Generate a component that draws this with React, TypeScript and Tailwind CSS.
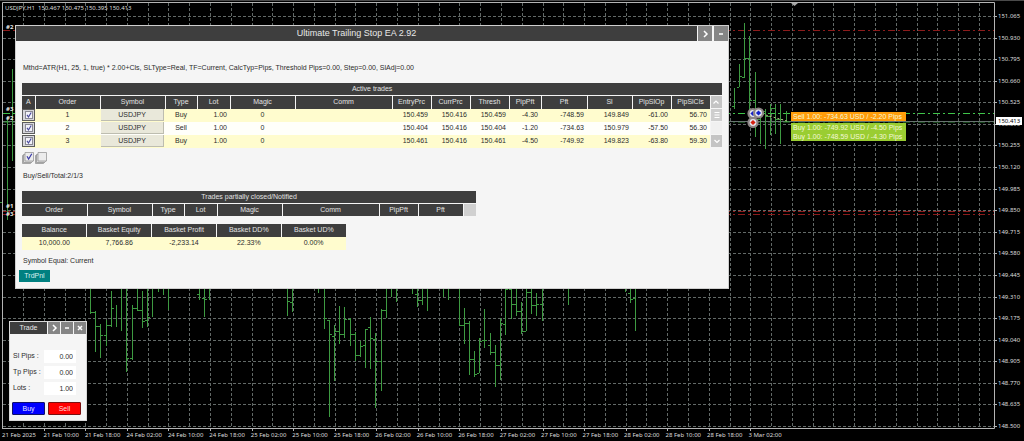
import { ReactNode } from "react";

type Bar = [x: number, high: number, low: number, open?: number, close?: number];

const bars: Bar[] = [
  [2, 202, 272, 202], [7, 117, 220, 121], [12, 69, 161],
  [90, 285, 314, undefined, 312], [95, 311, 352, 312, 326], [100, 324, 358, 326, 335], [106, 320, 346, 335, 325],
  [111, 291, 327, 325, 308], [116, 305, 327], [121, 285, 331], [126, 285, 372, undefined, 358], [132, 305, 360, 358, 308],
  [137, 285, 311, 308, 310], [142, 291, 328, 310, 321], [147, 285, 327, 320, 317], [152, 285, 317], [158, 285, 292],
  [163, 285, 295], [168, 285, 310], [199, 285, 300, 294], [204, 285, 317, 298, 299], [209, 285, 300],
  [287, 285, 316, undefined, 301], [292, 285, 312, 302], [318, 285, 293], [324, 285, 329, undefined, 318],
  [329, 320, 417, 320, 334], [334, 325, 381, 336, 331], [339, 306, 344, 331, 334], [344, 307, 338, 334, 319],
  [350, 318, 346, 319, 334], [355, 332, 361, 334, 355], [360, 341, 357, 355, 346], [365, 329, 368, 345, 329],
  [370, 317, 369, 327, 338], [375, 333, 408, 339, 361], [381, 309, 391, 361, 310], [386, 285, 318, 310],
  [391, 285, 297], [396, 285, 302], [412, 285, 294], [417, 285, 307, 294, 300], [422, 285, 305, 300], [427, 285, 311],
  [443, 285, 297], [448, 285, 300], [459, 285, 326, undefined, 325], [464, 308, 344, 325, 323], [469, 321, 375, 323, 359],
  [474, 351, 377, 359, 374], [479, 338, 373, 373, 341], [484, 309, 348, 340, 340], [490, 333, 355, 345, 352],
  [495, 345, 387, 352, 365], [500, 318, 380, 365, 323], [505, 285, 335, 324, 289], [511, 285, 319, 289, 304],
  [516, 285, 316, 304, 311], [521, 302, 334, 311, 331], [526, 285, 331, 331, 292], [531, 285, 314, 292, 305],
  [536, 293, 316, 305, 304], [542, 285, 321, 304], [568, 285, 305], [625, 285, 292], [630, 285, 303, 293, 299], [635, 285, 331, 298],
  [734, 88, 109, 106], [739, 64, 87, 87, 76], [744, 23, 78, 77, 58], [749, 36, 111, 58, 100],
  [755, 72, 137, 100, 119], [760, 109, 144, 119, 112], [765, 109, 149, 111, 116], [770, 104, 135, 116, 108],
  [775, 104, 134, 108, 119], [780, 104, 144, 119, 119], [786, 111, 122, 121, 121],
];

const prices = [
  "151.065", "150.930", "150.795", "150.660", "150.525", "150.390", "150.255", "150.120", "149.985", "149.850",
  "149.715", "149.580", "149.445", "149.310", "149.175", "149.040", "148.905", "148.770", "148.635", "148.500",
];

const times = [
  "21 Feb 2025", "21 Feb 10:00", "21 Feb 18:00", "24 Feb 02:00", "24 Feb 10:00", "24 Feb 18:00", "25 Feb 02:00",
  "25 Feb 10:00", "25 Feb 18:00", "26 Feb 02:00", "26 Feb 10:00", "26 Feb 18:00", "27 Feb 02:00", "27 Feb 10:00",
  "27 Feb 18:00", "28 Feb 02:00", "28 Feb 10:00", "28 Feb 18:00", "3 Mar 02:00",
];

const gridX = Array.from({ length: 47 }, (_, i) => Math.round(23 + i * 20.78));
const gridY = Array.from({ length: 20 }, (_, i) => Math.round(16 + i * 21.58));

function Marker({ x, y, color }: { x: number; y: number; color: string }) {
  return (
    <g>
      <circle cx={x} cy={y} r="5.6" fill="#8d8585" />
      <circle cx={x} cy={y} r="3.4" fill="#e4e4ee" />
      <path d={`M${x - 2.6} ${y}L${x} ${y - 2.6}L${x + 2.6} ${y}L${x} ${y + 2.6}Z`} fill={color} />
    </g>
  );
}

function Chart() {
  return (
    <svg className="absolute inset-0 h-full w-full" viewBox="0 0 1024 441" preserveAspectRatio="none" aria-hidden="true">
      <rect width="1024" height="1" fill="#4a4a4a" />
      <g stroke="#626967" strokeWidth="1" strokeDasharray="3 2">
        {gridX.map((x) => <path key={x} d={`M${x + 0.5} 3V428`} />)}
        {gridY.map((y) => <path key={y} d={`M3 ${y + 0.5}H994`} />)}
      </g>
      <g stroke="#8c1c1c" strokeWidth="1" strokeDasharray="7 3 2 3">
        <path d="M3 30.5H994M3 211.5H994M3 214.5H994" />
      </g>
      <path d="M3 121.5H994" stroke="#66736f" />
      <g stroke="#3fc44a" strokeDasharray="7 3 2 3">
        <path d="M3 113.5H994" />
        <path d="M3 122.5H994" strokeOpacity=".35" />
      </g>
      <g stroke="#3d9a41" strokeWidth="1">
        {bars.map(([x, h, l, o, c]) => (
          <path
            key={x}
            d={`M${x + 0.5} ${h}V${l}` + (o ? `M${x - 2} ${o + 0.5}H${x}` : "") + (c ? `M${x + 1} ${c + 0.5}H${x + 3}` : "")}
          />
        ))}
      </g>
      <path d="M762 114L787 121" stroke="#b9b98a" strokeDasharray="2 2" />
      <Marker x={753} y={113.5} color="#1420c8" />
      <Marker x={758.5} y={113} color="#1420c8" />
      <Marker x={753} y={122.5} color="#d42010" />
      <path d="M2.5 428V2.5H994.5V428.5H2" fill="none" stroke="#b4b4b4" />
      <path d="M791 3H798L794.500 6Z" fill="#a8a8a8" />
      <g stroke="#b4b4b4">
        {gridY.map((y) => <path key={y} d={`M995 ${y + 0.5}H997`} />)}
        {gridX.filter((_, i) => i % 2 === 1 && i < 36).map((x) => <path key={x} d={`M${x + 0.5} 429V431`} />)}
      </g>
      <g fill="#e8e8e8" className="font-['Noto_Sans',sans-serif] text-[6px] font-bold">
        <text x="6" y="29">#2</text>
        <text x="6" y="111">#3</text>
        <text x="6" y="120">#2</text>
        <text x="6" y="208">#1</text>
        <text x="6" y="216">#3</text>
      </g>
    </svg>
  );
}

function TradeTag({ text, tone }: { text: string; tone: string }) {
  return <div className={`h-[9px] w-[115px] whitespace-nowrap pl-[2px] text-[7px] leading-[9px] text-[#f4f7d8] ${tone}`}>{text}</div>;
}

function TitleButton({ label, kind }: { label: string; kind: "next" | "minus" | "close" }) {
  const paths = { next: "M3 1L6 4L3 7", minus: "M2 4H6", close: "M2 2L6 6M6 2L2 6" };
  return (
    <button aria-label={label} className="flex h-full flex-1 items-center justify-center bg-[#858585]">
      <svg viewBox="0 0 8 8" className="h-2 w-2" fill="none" stroke="#fff" strokeWidth="1.5"><path d={paths[kind]} /></svg>
    </button>
  );
}

function Check({ label }: { label: string }) {
  return (
    <label className="relative flex h-3 items-center justify-center border border-[#5c5c5c] bg-[#d6d6dc]">
      <input type="checkbox" defaultChecked aria-label={label} className="h-2 w-2 appearance-none border border-[#8a8a94] bg-[#f3f3fa]" />
      <svg viewBox="0 0 8 8" className="pointer-events-none absolute h-2 w-2" fill="none" stroke="#4a4a9c" strokeWidth="1.2">
        <path d="M2 3.800L3.500 6L6.200 1.500" />
      </svg>
    </label>
  );
}

function StackIcon({ label, checked }: { label: string; checked?: boolean }) {
  return (
    <button aria-label={label} className="h-[12px] w-[12px]">
      <svg viewBox="0 0 12 12" className="h-3 w-3" fill="#ececec" stroke="#8c8c8c" strokeWidth=".7">
        <path d="M.5 3.500V11.500H8.500L9.500 10.500V2.500Z" fill="#cfcfcf" />
        <path d="M1.500 2.500V10.500H9.500L10.500 9.500V1.500Z" fill="#dadada" />
        <path d="M3 .5V9H11.500V.5Z" />
        {checked && <path d="M5 4.300L6.600 7L9.800 1.800" fill="none" stroke="#3c3ca8" strokeWidth="1.2" />}
      </svg>
    </button>
  );
}

function Th({ children }: { children?: ReactNode }) {
  return <th className="h-[13px] overflow-hidden border-l border-t border-[#f5f5f5] bg-[#3e3e3e] p-0 text-center font-normal text-[#e2e2e2] first:border-l-0">{children}</th>;
}

function Columns({ widths }: { widths: string[] }) {
  return <colgroup>{widths.map((w, i) => <col key={i} className={w} />)}</colgroup>;
}

const trades = [
  { order: "1", type: "Buy", entry: "150.459", curr: "150.416", thresh: "150.459", pip: "-4.30", pft: "-748.59", sl: "149.849", op: "-61.00", cls: "56.70" },
  { order: "2", type: "Sell", entry: "150.404", curr: "150.416", thresh: "150.404", pip: "-1.20", pft: "-734.63", sl: "150.979", op: "-57.50", cls: "56.30" },
  { order: "3", type: "Buy", entry: "150.461", curr: "150.416", thresh: "150.461", pip: "-4.50", pft: "-749.92", sl: "149.823", op: "-63.80", cls: "59.30" },
];

const activeWidths = ["w-[13px]", "w-[65px]", "w-[65px]", "w-[32px]", "w-[33px]", "w-[65px]", "w-[97px]", "w-[39px]", "w-[39px]", "w-[39px]", "w-[32px]", "w-[46px]", "w-[45px]", "w-[39px]", "w-[39px]", "w-[12px]"];
const closedWidths = ["w-[65px]", "w-[65px]", "w-[32px]", "w-[33px]", "w-[65px]", "w-[97px]", "w-[39px]", "w-[45px]", "w-[13px]"];

function ScrollButton({ label, d, tone }: { label: string; d: string; tone: string }) {
  return (
    <button aria-label={label} className={`flex h-3 w-full items-center justify-center ${tone}`}>
      <svg viewBox="0 0 8 8" className="h-2 w-2 shrink-0" fill="none" stroke="#fff" strokeWidth="1.2"><path d={d} /></svg>
    </button>
  );
}

function ActiveTrades() {
  const scroll = [
    <ScrollButton label="Scroll handle" d="M1.500 1.500H6.500M1.500 4H6.500M1.500 6.500H6.500" tone="bg-[#cecece]" />,
    <div className="h-3 bg-[#f0f0f0]" />,
    <ScrollButton label="Scroll down" d="M1.500 3L4 5.500L6.500 3" tone="bg-[#c4c4c4]" />,
  ];
  return (
    <table className="w-[700px] table-fixed border-collapse text-[7px] leading-[12px]">
      <Columns widths={activeWidths} />
      <thead>
        <tr><th colSpan={16} className="h-3 bg-[#3e3e3e] p-0 text-center font-normal text-[#e2e2e2]">Active trades</th></tr>
        <tr>
          {["A", "Order", "Symbol", "Type", "Lot", "Magic", "Comm", "EntryPrc", "CurrPrc", "Thresh", "PipPft", "Pft", "Sl", "PipSlOp", "PipSlCls"].map((h) => <Th key={h}>{h}</Th>)}
          <th className="border-l border-t border-[#f5f5f5] p-0"><ScrollButton label="Scroll up" d="M1.500 5.500L4 3L6.500 5.500" tone="bg-[#c4c4c4]" /></th>
        </tr>
      </thead>
      <tbody>
        {trades.map((t, i) => (
          <tr key={t.order} className="h-[13px] odd:bg-[#fffcce] even:bg-[#fffffa]">
            <td className="p-0"><Check label={`Select order ${t.order}`} /></td>
            <td className="p-0 text-center">{t.order}</td>
            <td className="p-0"><button className="ml-px block h-3 w-[63px] border-b border-r border-[#bdbdb0] bg-[#e9e8da] text-center">USDJPY</button></td>
            <td className="p-0 text-center">{t.type}</td>
            <td className="py-0 pl-0 pr-[3px] text-right">1.00</td>
            <td className="p-0 text-center">0</td>
            <td className="p-0" />
            {[t.entry, t.curr, t.thresh, t.pip, t.pft, t.sl, t.op, t.cls].map((v, k) => <td key={k} className="py-0 pl-0 pr-[3px] text-right">{v}</td>)}
            <td className="bg-[#f5f5f5] py-0 pl-px pr-0">{scroll[i]}</td>
          </tr>
        ))}
      </tbody>
    </table>
  );
}

function MainPanel() {
  return (
    <section className="absolute left-[15px] top-[25px] w-[714px] border border-[#cfcfcf] bg-[#f5f5f5] pb-[6px] text-[7px] leading-[12px] text-[#2c2c2c]">
      <header className="flex h-[15px] bg-[#f5f5f5]">
        <h1 className="flex-1 bg-[#3e3e3e] text-center text-[9px] leading-[15px] text-[#e8e8e8]">Ultimate Trailing Stop EA 2.92</h1>
        <div className="flex w-[31px] gap-[2px] pl-px">
          <TitleButton label="Expand" kind="next" />
          <TitleButton label="Minimize" kind="minus" />
        </div>
      </header>
      <div className="px-[6px]">
        <p className="pb-[9px] pl-[1px] pt-[21px]">Mthd=ATR(H1, 25, 1, true) * 2.00+Cls, SLType=Real, TF=Current, CalcTyp=Pips, Threshold Pips=0.00, Step=0.00, SlAdj=0.00</p>
        <ActiveTrades />
        <div className="mt-[4px] flex gap-px">
          <StackIcon label="Select all" checked />
          <StackIcon label="Clear all" />
        </div>
        <p className="mt-[6px] pl-[1px]">Buy/Sell/Total:2/1/3</p>
        <table className="mt-[9px] w-[454px] table-fixed border-collapse">
          <Columns widths={closedWidths} />
          <thead>
            <tr><th colSpan={9} className="h-3 bg-[#3e3e3e] p-0 text-center font-normal text-[#e2e2e2]">Trades partially closed/Notified</th></tr>
            <tr>
              {["Order", "Symbol", "Type", "Lot", "Magic", "Comm", "PipPft", "Pft"].map((h) => <Th key={h}>{h}</Th>)}
              <td className="border-l border-t border-[#f5f5f5] bg-[#d0d0d0]" />
            </tr>
          </thead>
        </table>
        <table className="mt-[7px] w-[324px] table-fixed border-collapse">
          <thead><tr>{["Balance", "Basket Equity", "Basket Profit", "Basket DD%", "Basket UD%"].map((h) => <Th key={h}>{h}</Th>)}</tr></thead>
          <tbody>
            <tr className="h-[13px] bg-[#fffcce]">
              {["10,000.00", "7,766.86", "-2,233.14", "22.33%", "0.00%"].map((v) => <td key={v} className="p-0 text-center">{v}</td>)}
            </tr>
          </tbody>
        </table>
        <p className="mt-[5px] pl-[1px]">Symbol Equal: Current</p>
      </div>
      <button className="ml-[3px] mt-[3px] block h-[12px] w-[31px] bg-[#008080] text-center text-[#d8f0f0]">TrdPnl</button>
    </section>
  );
}

function Field({ id, label, value }: { id: string; label: string; value: string }) {
  return (
    <div className="flex h-[13px] items-start">
      <label htmlFor={id} className="w-[31px] whitespace-nowrap leading-[11px]">{label}</label>
      <input id={id} defaultValue={value} className="h-[13px] w-[32px] bg-white pr-[3px] text-right outline-none" />
    </div>
  );
}

function TradePanel() {
  return (
    <section className="absolute left-[9px] top-[321px] w-[78px] border border-[#d8d8d8] bg-[#f5f5f5] pb-[5px] text-[7px] leading-[12px] text-[#2c2c2c]">
      <header className="flex h-[12px] gap-px">
        <h2 className="w-[37px] bg-[#3e3e3e] text-center text-[#e8e8e8]">Trade</h2>
        <TitleButton label="Expand" kind="next" />
        <TitleButton label="Minimize" kind="minus" />
        <TitleButton label="Close" kind="close" />
      </header>
      <div className="flex flex-col gap-[3px] pl-[3px] pt-[16px]">
        <Field id="sl" label="Sl Pips :" value="0.00" />
        <Field id="tp" label="Tp Pips :" value="0.00" />
        <Field id="lots" label="Lots :" value="1.00" />
      </div>
      <div className="mt-[7px] flex gap-[3px] px-[2px]">
        <button className="h-[13px] w-[33px] rounded-[1px] border border-[#10106a] bg-[#0000ff] text-center leading-[11px] text-[#e4e4ff]">Buy</button>
        <button className="h-[13px] w-[33px] rounded-[1px] border border-[#7a1010] bg-[#ff0000] text-center leading-[11px] text-[#ffd8d8]">Sell</button>
      </div>
    </section>
  );
}

export default function App() {
  return (
    <main className="relative flex h-screen flex-col overflow-hidden bg-black font-['Liberation_Sans',Arial,sans-serif]">
      <Chart />
      <div className="relative flex min-h-0 flex-1 justify-between font-['Noto_Sans',sans-serif] text-[6px] leading-[10px] text-[#dcdcdc]">
        <p className="whitespace-pre pl-[5px] pt-[3px]">USDJPY,H1  150.467 150.475 150.395 150.413</p>
        <ol className="flex w-[26px] flex-col justify-between pt-[11px]">
          {prices.map((p) => <li key={p} className="h-[10px]">{p}</li>)}
        </ol>
      </div>
      <ol className="relative flex h-[10px] shrink-0 pl-[2px] font-['Noto_Sans',sans-serif] text-[6px] leading-[8px] text-[#dcdcdc]">
        {times.map((t) => <li key={t} className="w-[4.0586%] shrink-0 whitespace-nowrap">{t}</li>)}
      </ol>
      <div className="absolute right-[2px] top-[117px] h-[8px] w-[26px] bg-white pl-[2px] font-['Noto_Sans',sans-serif] text-[6px] leading-[8px] text-black">150.413</div>
      <div className="absolute left-[77.246%] top-[112px]">
        <TradeTag text="Sell 1.00: -734.63 USD / -2.20 Pips" tone="bg-[#ff9d0a]" />
        <div className="mt-[2px]">
          <TradeTag text="Buy 1.00: -749.92 USD / -4.50 Pips" tone="bg-[#9acd32]" />
          <TradeTag text="Buy 1.00: -748.59 USD / -4.30 Pips" tone="bg-[#9acd32]" />
        </div>
      </div>
      <MainPanel />
      <TradePanel />
    </main>
  );
}
